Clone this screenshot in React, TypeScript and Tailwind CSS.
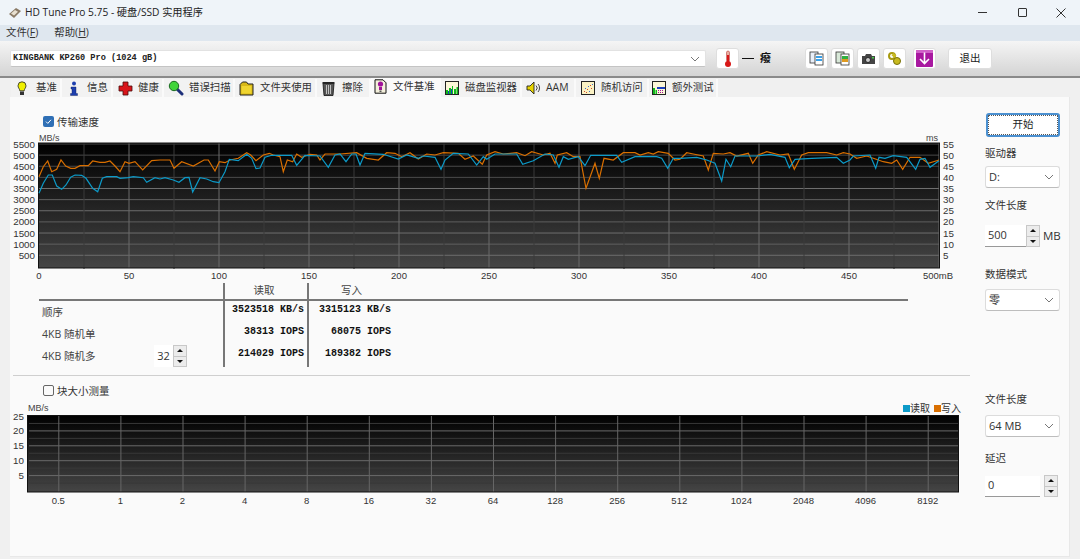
import { ReactNode } from "react"

const cjk = "font-['Open_Sans','Noto_Sans_CJK_SC',sans-serif]"
const fixed = "font-['Liberation_Mono','Noto_Sans_CJK_SC',monospace] font-bold"

type Pt = [number, number]

// points read off the reference, in zoomed coordinates of each crop
const shift = (ox: number, pts: number[][]): Pt[] => pts.map(([x, y]) => [ox + x / 3, 130 + y / 3])

const blue: Pt[] = [
  ...shift(0, [[117,190],[130,160],[145,135],[157,135],[170,168],[185,178],[198,165],[212,142],[225,135],[245,136],[258,145],[278,175],[293,185],[307,145],[320,140],[350,140],[360,145],[385,143],[400,140],[430,143],[440,157],[465,143],[480,147],[495,143],[520,150],[537,157],[555,143],[567,142],[578,186],[600,143],[620,147],[640,155],[657,158],[675,125],[688,88],[715,92],[740,73],[755,85],[768,116],[780,114],[795,82],[815,76],[875,76],[890,106],[915,76],[960,78],[985,112],[1005,75],[1020,72]]),
  ...shift(340, [[18,95],[35,72],[48,72],[60,105],[75,70],[130,73],[175,87],[200,75],[235,85],[250,78],[285,82],[303,118],[315,90],[340,70],[385,72],[410,105],[430,80],[440,88],[465,72],[530,72],[548,103],[580,92],[615,72],[640,75],[657,112],[670,80],[685,88],[715,80],[735,107],[752,76],[800,76],[830,76],[845,97],[885,80],[950,80],[965,85],[983,115],[1000,85],[1020,85]]),
  ...shift(680, [[50,82],[80,90],[105,100],[125,153],[138,88],[152,110],[165,78],[230,78],[270,73],[315,82],[328,113],[345,88],[395,85],[470,82],[490,100],[510,90],[520,78],[570,75],[587,115],[597,82],[615,85],[640,77],[680,82],[707,118],[720,88],[735,85],[750,112],[777,92]]),
]

const orange: Pt[] = [
  ...shift(0, [[117,140],[130,110],[143,93],[155,125],[170,118],[183,90],[197,108],[212,115],[225,115],[240,107],[265,107],[278,93],[300,97],[315,97],[330,93],[345,108],[360,125],[375,95],[387,100],[405,95],[428,120],[455,92],[480,90],[510,90],[522,115],[545,95],[580,108],[612,90],[625,90],[645,123],[658,95],[675,98],[690,90],[715,85],[740,68],[752,75],[768,92],[790,75],[808,70],[820,75],[840,80],[850,125],[862,90],[878,95],[890,72],[905,82],[930,73],[950,75],[960,90],[975,72],[1020,72]]),
  ...shift(340, [[50,68],[80,85],[115,90],[140,68],[165,70],[185,80],[210,68],[235,87],[260,72],[285,75],[310,68],[355,70],[375,88],[400,78],[427,103],[440,75],[465,65],[490,72],[530,68],[555,77],[575,65],[610,75],[630,70],[645,100],[652,75],[680,68],[700,80],[720,80],[738,175],[765,100],[778,145],[792,85],[820,90],[850,68],[885,68],[900,75],[925,68],[940,72],[955,65],[985,70],[1005,90],[1020,88]]),
  ...shift(680, [[20,68],[40,72],[70,78],[85,120],[100,70],[130,72],[150,68],[170,78],[205,70],[218,100],[235,75],[260,65],[300,75],[325,72],[343,118],[365,75],[385,68],[440,68],[470,75],[490,68],[510,72],[530,85],[560,78],[580,85],[610,95],[635,100],[650,90],[668,118],[690,82],[720,82],[745,100],[777,90]]),
]

const line = (pts: Pt[]) => pts.map(([x, y]) => `${x.toFixed(1)},${y.toFixed(1)}`).join(" ")

function TransferChart() {
  const left = 38.5
  const right = 939.5
  const top = 143
  const bottom = 268
  const xAt = (mb: number) => 39 + mb * 1.8
  const yAt = (v: number) => 266.4 - (v / 5500) * 122.4
  const ticks = Array.from({ length: 11 }, (_, i) => (i + 1) * 500)
  const hLine = (v: number) => {
    if (v >= 4000) return "#4a4a4a"
    return v % 1000 === 0 ? "#606060" : "#6e6e6e"
  }
  return (
    <svg width={960} height={153} viewBox="10 130 960 153" className="block">
      <defs>
        <linearGradient id="chartBg" x1="0" y1="0" x2="0" y2="1">
          <stop offset="0" stopColor="#000000" />
          <stop offset="1" stopColor="#454545" />
        </linearGradient>
      </defs>
      <rect x={left} y={top} width={right - left} height={bottom - top} fill="url(#chartBg)" />
      {ticks.map((v) => (
        <line key={v} x1={left} x2={right} y1={yAt(v)} y2={yAt(v)} stroke={hLine(v)} strokeWidth={1} />
      ))}
      {Array.from({ length: 20 }, (_, i) => (i + 1) * 25).map((mb) => (
        <line
          key={mb}
          x1={xAt(mb)}
          x2={xAt(mb)}
          y1={top}
          y2={mb % 50 === 0 ? bottom : bottom + 1}
          stroke={mb % 50 === 0 ? "#6a6a6a" : "#3a3a3a"}
          strokeWidth={1}
        />
      ))}
      <rect x={left} y={top} width={right - left} height={bottom - top} fill="none" stroke="#111" strokeWidth={1} />
      <polyline points={line(orange)} fill="none" stroke="#d96f00" strokeWidth={1.2} />
      <polyline points={line(blue)} fill="none" stroke="#0c9ac8" strokeWidth={1.2} />
      <text x={39} y={141} fontSize={9} fill="#444" fontFamily="Liberation Sans">MB/s</text>
      <text x={926} y={141} fontSize={9} fill="#444" fontFamily="Liberation Sans">ms</text>
      {ticks.map((v) => (
        <text key={v} x={35} y={yAt(v) + 3.5} fontSize={9.8} fill="#333" textAnchor="end" fontFamily="Liberation Sans">{v}</text>
      ))}
      {ticks.map((v) => (
        <text key={v} x={943} y={yAt(v) + 3.5} fontSize={9.8} fill="#333" fontFamily="Liberation Sans">{v / 100}</text>
      ))}
      {Array.from({ length: 10 }, (_, i) => i * 50).map((mb) => (
        <text key={mb} x={xAt(mb)} y={279} fontSize={9.5} fill="#333" textAnchor="middle" fontFamily="Liberation Sans">{mb}</text>
      ))}
      <text x={938} y={279} fontSize={9.5} fill="#333" textAnchor="middle" fontFamily="Liberation Sans">500mB</text>
    </svg>
  )
}

function BlockChart() {
  const labels = ["0.5", "1", "2", "4", "8", "16", "32", "64", "128", "256", "512", "1024", "2048", "4096", "8192"]
  const xAt = (i: number) => 58.8 + i * 62.1
  const yAt = (v: number) => 416 + ((25 - v) / 5) * 14.9
  return (
    <svg width={960} height={110} viewBox="10 400 960 110" className="block">
      <defs>
        <linearGradient id="blockBg" x1="0" y1="0" x2="0" y2="1">
          <stop offset="0" stopColor="#000000" />
          <stop offset="1" stopColor="#454545" />
        </linearGradient>
      </defs>
      <rect x={27} y={415} width={931.5} height={77} fill="url(#blockBg)" />
      {[22.5, 17.5, 12.5, 7.5, 2.5].map((v) => (
        <line key={v} x1={29} x2={958} y1={yAt(v)} y2={yAt(v)} stroke="#383838" />
      ))}
      {[20, 15, 10, 5].map((v) => (
        <line key={v} x1={29} x2={958} y1={yAt(v)} y2={yAt(v)} stroke="#6a6a6a" />
      ))}
      {labels.map((l, i) => (
        <line key={l} x1={xAt(i)} x2={xAt(i)} y1={416} y2={492} stroke="#666" />
      ))}
      <rect x={27.5} y={415.5} width={931} height={76.5} fill="none" stroke="#111" />
      <text x={28} y={411} fontSize={9} fill="#444" fontFamily="Liberation Sans">MB/s</text>
      {[25, 20, 15, 10, 5].map((v) => (
        <text key={v} x={24} y={yAt(v) + 3.5} fontSize={9.8} fill="#333" textAnchor="end" fontFamily="Liberation Sans">{v}</text>
      ))}
      {labels.map((l, i) => (
        <text key={l} x={xAt(i) - 0.5} y={504} fontSize={9.5} fill="#333" textAnchor="middle" fontFamily="Liberation Sans">{l}</text>
      ))}
      <rect x={903} y={405} width={7} height={7} fill="#0c9ac8" />
      <text x={910} y={412} fontSize={10} fill="#333" fontFamily="Noto Sans CJK SC">读取</text>
      <rect x={934} y={405} width={7} height={7} fill="#d96f00" />
      <text x={941} y={412} fontSize={10} fill="#333" fontFamily="Noto Sans CJK SC">写入</text>
    </svg>
  )
}

function Chevron() {
  return (
    <svg width={10} height={6} viewBox="0 0 10 6" className="shrink-0">
      <path d="M1 1l4 4 4-4" fill="none" stroke="#777" strokeWidth={1} />
    </svg>
  )
}

function Select({ children }: { children: ReactNode }) {
  return (
    <div className="h-[22px] w-[75px] bg-white rounded-[3px] border border-[#dcdcdc] border-b-[#bdbdbd] flex items-center justify-between pl-[3px] pr-[5px] text-[11px] text-[#333]">
      <span>{children}</span>
      <Chevron />
    </div>
  )
}

function Spinner() {
  return (
    <div className="w-[14px] h-[22px] flex flex-col gap-px border border-[#c8c8c8] bg-[#c8c8c8] shrink-0">
      <div className="flex-1 bg-[#ececec] flex items-center justify-center">
        <div className="w-0 h-0 border-x-[3px] border-x-transparent border-b-[3px] border-b-[#111]" />
      </div>
      <div className="flex-1 bg-[#ececec] flex items-center justify-center">
        <div className="w-0 h-0 border-x-[3px] border-x-transparent border-t-[3px] border-t-[#111]" />
      </div>
    </div>
  )
}

function Checkbox({ checked }: { checked?: boolean }) {
  if (checked) {
    return (
      <div className="w-[11px] h-[11px] rounded-[2px] bg-[#2f6fb5] flex items-center justify-center">
        <svg width={9} height={9} viewBox="0 0 9 9">
          <path d="M2 4.6l1.8 1.8L7 2.8" fill="none" stroke="#fff" strokeWidth={1} />
        </svg>
      </div>
    )
  }
  return <div className="w-[11px] h-[11px] rounded-[2px] border border-[#666] bg-[#fafafa]" />
}

const tabIcons: Record<string, ReactNode> = {
  bulb: (
    <svg width={10} height={15} viewBox="0 0 10 15">
      <path d="M5 .8a4 4 0 0 1 4 4c0 2-1.6 2.8-1.8 5H2.800C2.600 7.600 1 6.800 1 4.800a4 4 0 0 1 4-4z" fill="#efef00" stroke="#222" strokeWidth={0.8} />
      <rect x={3} y={10.5} width={4} height={3.5} fill="#333" />
    </svg>
  ),
  info: (
    <svg width={10} height={15} viewBox="0 0 10 15">
      <circle cx={5} cy={2.5} r={2} fill="#1d3fae" />
      <path d="M2 6h5v6.5h1.500V14.500H1.500v-2H3V8H2z" fill="#1d3fae" stroke="#0a1a55" strokeWidth={0.4} />
    </svg>
  ),
  cross: (
    <svg width={15} height={15} viewBox="0 0 15 15">
      <path d="M5 1h5v4h4v5h-4v4H5v-4H1V5h4z" fill="#d8141a" stroke="#4a0a0a" strokeWidth={0.8} />
    </svg>
  ),
  magnifier: (
    <svg width={16} height={16} viewBox="0 0 16 16">
      <path d="M9 9l5 5" stroke="#1d2f7a" strokeWidth={3} strokeLinecap="round" />
      <circle cx={6} cy={6} r={4.7} fill="#3fd43a" stroke="#1a6a20" strokeWidth={1} />
    </svg>
  ),
  folder: (
    <svg width={15} height={15} viewBox="0 0 15 15">
      <path d="M1 3.500L3.500 1h4L9 3h5v11H1z" fill="#d8b818" stroke="#222" strokeWidth={1} />
      <rect x={2.5} y={5} width={10} height={7.5} fill="#f0d530" />
    </svg>
  ),
  trash: (
    <svg width={13} height={15} viewBox="0 0 13 15">
      <path d="M1 2.500h11l-1 12H2z" fill="#555" stroke="#111" strokeWidth={0.8} />
      <path d="M4.500 4v9M6.500 4v9M8.500 4v9" stroke="#ddd" strokeWidth={0.8} />
      <rect x={0.5} y={1} width={12} height={1.8} fill="#222" />
    </svg>
  ),
  file: (
    <svg width={13} height={15} viewBox="0 0 13 15">
      <path d="M1 .8h8l3 3v10.400H1z" fill="#f4f0dc" stroke="#111" strokeWidth={1} />
      <circle cx={6.5} cy={5} r={2.6} fill="#a0149a" />
      <rect x={5} y={8} width={3} height={3} fill="#a0149a" />
      <rect x={5.5} y={11.5} width={2} height={1.5} fill="#555" />
    </svg>
  ),
  monitor: (
    <svg width={14} height={14} viewBox="0 0 14 14">
      <rect x={0.5} y={0.5} width={13} height={13} fill="#fbf6d8" stroke="#222" />
      <path d="M1 9h2V13H1zM4 7h2V13H4zM7 5h1V13H7zM9 8h2V13H9zM11.500 6H13V13H11.500z" fill="#0fb81a" />
      <path d="M3 10h1v3H3zM6 8h1v5H6z" fill="#1a3fc0" />
    </svg>
  ),
  speaker: (
    <svg width={15} height={14} viewBox="0 0 15 14">
      <path d="M1 5h3l4-4v12L4 9H1z" fill="#e8d400" stroke="#222" strokeWidth={0.9} />
      <path d="M10 4.500a3.500 3.500 0 0 1 0 5M12 3a6 6 0 0 1 0 8" fill="none" stroke="#444" strokeWidth={1} />
    </svg>
  ),
  random: (
    <svg width={14} height={14} viewBox="0 0 14 14">
      <rect x={0.5} y={0.5} width={13} height={13} fill="#fbf2c4" stroke="#222" />
      <path d="M3 10h1v1H3zM6 8h1v1H6zM9 4h1v1H9zM5 11h1v1H5zM10 7h1v1h-1z" fill="#d24a2a" />
      <path d="M4 7h1v1H4zM8 10h1v1H8zM7 5h1v1H7zM11 3h1v1h-1z" fill="#3a6ad0" />
    </svg>
  ),
  extra: (
    <svg width={14} height={14} viewBox="0 0 14 14">
      <rect x={0.5} y={0.5} width={13} height={13} fill="#fbf6d8" stroke="#222" />
      <path d="M1 7h2v6H1zM3.500 9H5v4H3.500z" fill="#0fb81a" />
      <rect x={5} y={6} width={8} height={2} fill="#1a3fc0" />
      <path d="M6 9h1v1H6zM8 9h1v1H8zM10 9h1v1h-1zM6 11h1v1H6zM8 11h1v1H8zM10 11h1v1h-1z" fill="#a0149a" />
    </svg>
  ),
}

// box = width of the icon slot, so the label starts where the reference has it
const tabs = [
  { icon: "bulb", label: "基准", w: "w-[51px]", box: "w-[22px] mr-[3px]" },
  { icon: "info", label: "信息", w: "w-[51px]", box: "w-[24px] mr-[1px]" },
  { icon: "cross", label: "健康", w: "w-[51px]", box: "w-[24px] mr-[1px]" },
  { icon: "magnifier", label: "错误扫描", w: "w-[71px]", box: "w-[24px] mr-[1px]" },
  { icon: "folder", label: "文件夹使用", w: "w-[82px]", box: "w-[22px] mr-[3px]" },
  { icon: "trash", label: "擦除", w: "w-[54px]", box: "w-[22px] mr-[3px]" },
  { icon: "file", label: "文件基准", w: "w-[70px]", box: "w-[18px] mr-[4px]", active: true },
  { icon: "monitor", label: "磁盘监视器", w: "w-[81px]", box: "w-[22px] mr-[2px]" },
  { icon: "speaker", label: "AAM", w: "w-[54px]", box: "w-[22px] mr-[2px]" },
  { icon: "random", label: "随机访问", w: "w-[73px]", box: "w-[24px] mr-[1px]" },
  { icon: "extra", label: "额外测试", w: "w-[69px]", box: "w-[20px] mr-[3px]" },
]

function ToolButton({ children, w = "w-[23px]" }: { children: ReactNode; w?: string }) {
  return (
    <div className={`${w} h-[21px] rounded-[3px] bg-white border border-[#dedede] flex items-center justify-center shrink-0`}>
      {children}
    </div>
  )
}

function ResultRow({ label, read, write, children }: { label: string; read: string; write: string; children?: ReactNode }) {
  return (
    <div className="flex h-[22px]">
      <div className="w-[184px] flex items-center justify-between text-[10.5px] text-[#444] pl-[3px] pr-[36px]">
        <span className="mt-[2px]">{label}</span>
        {children}
      </div>
      <div className={`w-[84px] border-l-2 border-[#777] text-[10px] text-[#111] text-right pr-[3px] pt-[2px] leading-[14px] whitespace-pre ${fixed}`}>{read}</div>
      <div className={`w-[85px] border-l-2 border-[#777] text-[10px] text-[#111] text-right pr-[1px] pt-[2px] leading-[14px] whitespace-pre ${fixed}`}>{write}</div>
    </div>
  )
}

export default function App() {
  return (
    <div className={`w-[1080px] h-[559px] overflow-hidden flex flex-col bg-[#f0f0f0] ${cjk}`}>
      {/* title bar */}
      <div className="h-[25px] bg-[#eff4f9] flex items-center pl-[8px] shrink-0">
        <svg width={14} height={12} viewBox="0 0 14 12">
          <path d="M1 7l7-6 5 3-7 7z" fill="#8a7a66" />
          <path d="M3 6.500l4-3.500 3 1.800-4 3.700z" fill="#e8e0d0" />
        </svg>
        <span className="ml-[3px] text-[10.2px] text-[#222]">HD Tune Pro 5.75 - 硬盘/SSD 实用程序</span>
        <div className="ml-auto flex items-center">
          <div className="w-[40px] flex justify-center">
            <div className="w-[9px] h-px bg-[#333]" />
          </div>
          <div className="w-[40px] flex justify-center">
            <div className="w-[9px] h-[9px] rounded-[1px] border border-[#333]" />
          </div>
          <div className="w-[38px] flex justify-center">
            <svg width={10} height={10} viewBox="0 0 10 10">
              <path d="M.5.5l9 9M9.500.5l-9 9" stroke="#333" strokeWidth={1} />
            </svg>
          </div>
        </div>
      </div>
      {/* menu bar */}
      <div className="h-[16px] bg-[#dfe7ef] flex items-center pl-[6px] gap-[16px] text-[10.4px] text-[#333] shrink-0">
        <span>文件(<span className="underline">F</span>)</span>
        <span>帮助(<span className="underline">H</span>)</span>
      </div>
      {/* toolbar */}
      <div className="h-[37px] bg-gradient-to-b from-[#f5f5f5] to-[#d4d4d4] border-b-2 border-[#8a8a8a] flex items-center pl-[10px] shrink-0">
        <div className={`w-[696px] h-[17px] bg-white rounded-[2px] border border-[#e2e2e2] border-b-[#c4c4c4] flex items-center justify-between pl-[2px] pr-[5px] text-[8.6px] text-[#222] whitespace-pre ${fixed}`}>
          <span>KINGBANK KP260 Pro (1024 gB)</span>
          <Chevron />
        </div>
        <div className="ml-[10px]">
          <ToolButton>
            <svg width={8} height={18} viewBox="0 0 8 18">
              <rect x={2.5} y={1} width={3} height={11} rx={1.5} fill="#e8b0a0" stroke="#b02020" strokeWidth={0.5} />
              <rect x={3} y={5} width={2} height={8} fill="#d81818" />
              <circle cx={4} cy={14} r={3} fill="#d81818" />
            </svg>
          </ToolButton>
        </div>
        <div className="ml-[3px] w-[12px] h-px bg-[#111]" />
        <span className="ml-[6px] text-[11px] font-bold text-[#111]">癈</span>
        <div className="ml-[34px] flex gap-[3px]">
          <ToolButton>
            <svg width={15} height={15} viewBox="0 0 15 15">
              <rect x={1} y={1} width={8} height={11} fill="#e8eef8" stroke="#333" strokeWidth={0.8} />
              <rect x={6} y={3} width={8} height={11} fill="#fff" stroke="#333" strokeWidth={0.8} />
              <path d="M7 5h6v2H7zM7 8h6v2H7z" fill="#3aa0e8" />
            </svg>
          </ToolButton>
          <ToolButton>
            <svg width={15} height={15} viewBox="0 0 15 15">
              <rect x={1} y={1} width={8} height={11} fill="#d8e8d8" stroke="#333" strokeWidth={0.8} />
              <rect x={6} y={3} width={8} height={11} fill="#fff" stroke="#333" strokeWidth={0.8} />
              <path d="M7 5h6v3H7z" fill="#30b040" />
              <path d="M7 8h6v3H7z" fill="#e09a20" />
            </svg>
          </ToolButton>
          <ToolButton>
            <svg width={15} height={12} viewBox="0 0 15 12">
              <path d="M1 3h3l1-2h5l1 2h3v8H1z" fill="#444" />
              <circle cx={7} cy={7} r={2.5} fill="#ccc" stroke="#111" strokeWidth={0.8} />
              <rect x={11} y={4} width={2} height={1.5} fill="#4c4" />
            </svg>
          </ToolButton>
          <ToolButton>
            <svg width={15} height={15} viewBox="0 0 15 15">
              <circle cx={5} cy={5} r={3} fill="none" stroke="#a89a10" strokeWidth={2} />
              <circle cx={10} cy={10} r={3.5} fill="#c8ba20" stroke="#77700a" strokeWidth={1} />
              <rect x={5} y={3} width={4} height={3} fill="#c8ba20" transform="rotate(45 7 4.5)" />
            </svg>
          </ToolButton>
        </div>
        <div className="ml-[7px]">
          <ToolButton>
            <svg width={17} height={17} viewBox="0 0 17 17">
              <rect width={17} height={17} rx={1} fill="#a818a0" />
              <rect width={17} height={3} fill="#d060c8" />
              <path d="M8.500 2.500v11M4 9l4.500 4.500L13 9" fill="none" stroke="#fff" strokeWidth={1.6} />
            </svg>
          </ToolButton>
        </div>
        <div className="ml-[12px]">
          <ToolButton w="w-[44px]">
            <span className="text-[10.5px] text-[#222]">退出</span>
          </ToolButton>
        </div>
      </div>
      {/* tabs */}
      <div className="h-[19px] flex items-end pl-[11px] shrink-0">
        {tabs.map((t) => (
          <div
            key={t.label}
            className={`${t.w} flex items-center shrink-0 whitespace-nowrap text-[10.4px] text-[#333] ${t.active ? "h-[19px] bg-[#fafafa] pb-[2px]" : "h-[18px] bg-[#f2f2f2] border-r-2 border-[#fafafa]"}`}
          >
            <div className={`${t.box} flex justify-center shrink-0`}>{tabIcons[t.icon]}</div>
            <span>{t.label}</span>
          </div>
        ))}
      </div>
      {/* page */}
      <div className="w-[1060px] h-[460px] ml-[10px] bg-[#fafafa] border-r border-b border-[#e8e8e8] flex">
        <div className="w-[960px] shrink-0 flex flex-col">
          <div className="h-[33px] shrink-0 flex items-start pt-[18px] pl-[33px] gap-[3px] text-[10.5px] text-[#333]">
            <div className="mt-[1px]"><Checkbox checked /></div>
            <span className="leading-[14px]">传输速度</span>
          </div>
          <TransferChart />
          <div className="ml-[29px] h-[85px] shrink-0 flex flex-col">
            <div className="w-[869px] flex h-[18px] border-b-2 border-[#777] text-[10.5px] text-[#444] shrink-0">
              <div className="w-[184px]" />
              <div className="w-[84px] border-l-2 border-[#777] text-center pr-[4px] leading-[14px]">读取</div>
              <div className="w-[85px] border-l-2 border-[#777] text-center pl-[2px] leading-[14px]">写入</div>
            </div>
            <ResultRow label="顺序" read="3523518 KB/s" write="3315123 KB/s" />
            <ResultRow label="4KB 随机单" read="38313 IOPS" write="68075 IOPS" />
            <ResultRow label="4KB 随机多" read="214029 IOPS" write="189382 IOPS">
              <div className="flex items-center">
                <div className="w-[19px] h-[22px] bg-white text-[11px] text-[#333] flex items-center justify-center">32</div>
                <Spinner />
              </div>
            </ResultRow>
          </div>
          <div className="h-[16px] shrink-0 pl-[3px] pt-[7px]">
            <div className="w-[957px] h-px bg-[#cfcfcf]" />
          </div>
          <div className="h-[16px] shrink-0 pl-[33px] flex items-start gap-[3px] text-[10.5px] text-[#333]">
            <div className="mt-[1px]"><Checkbox /></div>
            <span className="leading-[14px]">块大小测量</span>
          </div>
          <BlockChart />
        </div>
        <div className="ml-[15px] w-[76px] flex flex-col items-start pt-[16px] text-[10.5px] text-[#333]">
          <div className="w-[74px] h-[24px] ml-px rounded-[3px] border-2 border-[#4a90d0] bg-white flex items-center justify-center outline-1 -outline-offset-3 outline-dotted outline-[#555] text-[#222]">开始</div>
          <span className="mt-[8px] leading-[16px]">驱动器</span>
          <div className="mt-[5px]"><Select>D:</Select></div>
          <span className="mt-[9px] leading-[16px]">文件长度</span>
          <div className="mt-[12px] flex items-center">
            <div className="w-[41px] h-[22px] bg-white border-b border-[#999] flex items-center pl-[3px] text-[11px]">500</div>
            <Spinner />
            <span className="ml-[3px] text-[11.5px]">MB</span>
          </div>
          <span className="mt-[19px] leading-[16px]">数据模式</span>
          <div className="mt-[7px]"><Select>零</Select></div>
          <span className="mt-[80px] leading-[16px]">文件长度</span>
          <div className="mt-[8px]"><Select>64 MB</Select></div>
          <span className="mt-[13px] leading-[16px]">延迟</span>
          <div className="mt-[9px] flex items-center">
            <div className="w-[55px] h-[21px] bg-white border-b border-[#999] flex items-center pl-[3px] text-[11px]">0</div>
            <div className="ml-[4px]"><Spinner /></div>
          </div>
        </div>
      </div>
    </div>
  )
}
